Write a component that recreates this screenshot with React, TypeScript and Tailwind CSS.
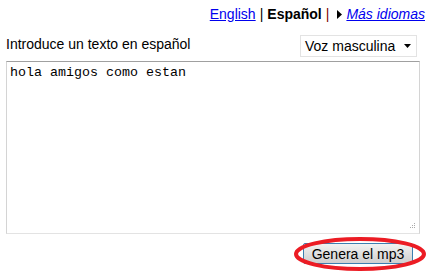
import React from 'react'

export default function App() {
  return (
    <div className="h-[276px] w-[441px] bg-white font-['Liberation_Sans',Arial,sans-serif] text-[14px] text-black">
      <div className="flex justify-end pr-[16px] pt-[6px] leading-[17px]">
        <a href="#" className="text-[#0000ee] underline">English</a>
        <span className="mx-[4px]">|</span>
        <b>Español</b>
        <span className="mx-[4px] text-[#800000]">|</span>
        <span className="ml-[4px] flex items-center">
          <svg width="5" height="9" viewBox="0 0 5 9" className="mr-[4px]">
            <path d="M0 0L5 4.5L0 9Z" fill="#000" />
          </svg>
          <a href="#" className="italic text-[#0000ee] underline">Más idiomas</a>
        </span>
      </div>
      <div className="mt-[12px] flex items-end justify-between pl-[6px] pr-[24px]">
        <span className="mb-[4px] leading-[17px]">Introduce un texto en español</span>
        <div className="flex h-[22px] w-[117px] items-center justify-between border border-[#e3e3e3] pl-[4px] pr-[5px]">
          <span className="leading-[17px]">Voz masculina</span>
          <svg width="7" height="4" viewBox="0 0 7 4">
            <path d="M0 0H7L3.5 4Z" fill="#000" />
          </svg>
        </div>
      </div>
      <div className="relative mx-[6px] mt-[4px] h-[173px] w-[414px] border border-t-[#a0a0a0] border-r-[#d4d4d4] border-b-[#e3e3e3] border-l-[#d4d4d4]">
        <div className="px-[3px] pt-[3px] font-['Courier_New','Liberation_Mono',monospace] text-[13.33px] leading-[16px]">hola amigos como estan</div>
        <svg width="7" height="7" viewBox="0 0 7 7" className="absolute bottom-[3px] right-[3px]">
          <rect x="5" y="0" width="1" height="1" fill="#aaa" />
          <rect x="3" y="2" width="1" height="1" fill="#aaa" />
          <rect x="5" y="2" width="1" height="1" fill="#aaa" />
          <rect x="1" y="4" width="1" height="1" fill="#aaa" />
          <rect x="3" y="4" width="1" height="1" fill="#aaa" />
          <rect x="5" y="4" width="1" height="1" fill="#aaa" />
        </svg>
      </div>
      <div className="mt-[9px] flex justify-end pr-[28px]">
        <div className="relative">
          <button className="h-[21px] w-[110px] rounded-[2px] border border-[#3c7fb1] bg-gradient-to-b from-[#f2f2f2] to-[#cfcfcf] text-[14px] leading-[16px]">Genera el mp3</button>
          <svg width="136" height="36" viewBox="0 0 136 36" className="absolute left-[-11px] top-[-7px]">
            <ellipse cx="68" cy="18" rx="64" ry="15" fill="none" stroke="#ec1c24" strokeWidth="4" />
          </svg>
        </div>
      </div>
    </div>
  )
}
